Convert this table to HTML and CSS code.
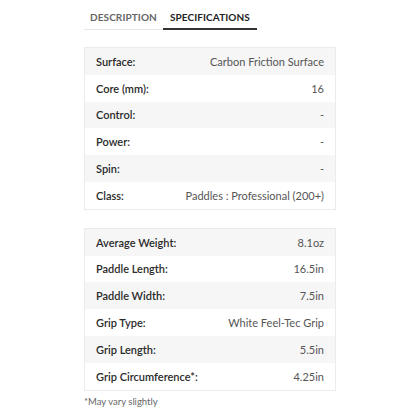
FILE: index.html
```html
<!DOCTYPE html>
<html>
<head>
<meta charset="utf-8">
<link rel="stylesheet" href="styles.css">
</head>
<body>
<div class="wrap">
  <div class="tabs">
    <div class="tab">DESCRIPTION</div>
    <div class="tab active">SPECIFICATIONS</div>
  </div>
  <div class="spec">
    <div class="row"><span class="k">Surface:</span><span class="v">Carbon Friction Surface</span></div>
    <div class="row"><span class="k">Core (mm):</span><span class="v">16</span></div>
    <div class="row"><span class="k">Control:</span><span class="v">-</span></div>
    <div class="row"><span class="k">Power:</span><span class="v">-</span></div>
    <div class="row"><span class="k">Spin:</span><span class="v">-</span></div>
    <div class="row"><span class="k">Class:</span><span class="v">Paddles : Professional (200+)</span></div>
  </div>
  <div class="spec">
    <div class="row"><span class="k">Average Weight:</span><span class="v">8.1oz</span></div>
    <div class="row"><span class="k">Paddle Length:</span><span class="v">16.5in</span></div>
    <div class="row"><span class="k">Paddle Width:</span><span class="v">7.5in</span></div>
    <div class="row"><span class="k">Grip Type:</span><span class="v">White Feel-Tec Grip</span></div>
    <div class="row"><span class="k">Grip Length:</span><span class="v">5.5in</span></div>
    <div class="row"><span class="k">Grip Circumference*:</span><span class="v">4.25in</span></div>
  </div>
  <p class="note">*May vary slightly</p>
</div>
</body>
</html>
```
FILE: styles.css
```css
* { box-sizing: border-box; }
body {
  margin: 0;
  background: #fff;
  font-family: Lato, "Noto Sans", sans-serif;
  color: #222;
}
.wrap {
  width: 252px;
  margin-left: 84px;
}
.tabs {
  display: inline-flex;
  border-bottom: 1px solid #e6e6e6;
  padding-top: 11px;
}
.tab {
  font-size: 10px;
  font-weight: 700;
  letter-spacing: 0.1px;
  color: #666;
  padding: 0 6px 4px;
  line-height: 13px;
  margin-bottom: -1px;
  border-bottom: 2px solid transparent;
}
.tab.active {
  color: #222;
  border-bottom-color: #333;
  padding-left: 7px;
  padding-right: 7px;
}
.spec {
  margin-top: 18px;
  border: 1px solid #ebebeb;
}
.tabs + .spec { margin-top: 17px; }
.row {
  display: flex;
  justify-content: space-between;
  align-items: center;
  height: 26.8px;
  padding: 0 11px;
  font-size: 11px;
}
.row:nth-child(odd) { background: #f6f6f6; }
.k { font-weight: 600; color: #2a2a2a; }
.v { color: #555; }
.note {
  margin: 5px 0 0;
  font-size: 9.5px;
  line-height: 12px;
  color: #666;
}
```
